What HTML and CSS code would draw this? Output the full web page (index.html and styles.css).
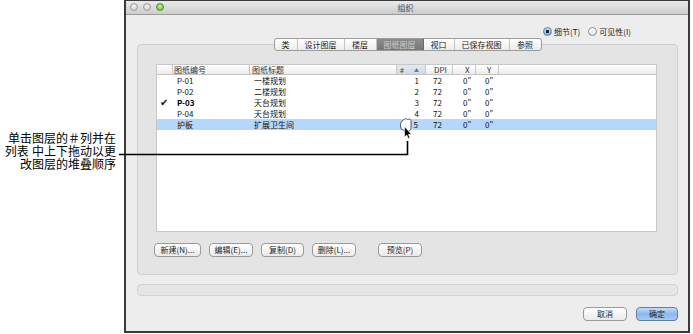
FILE: index.html
```html
<!DOCTYPE html>
<html lang="zh-CN">
<head>
<meta charset="utf-8">
<title>组织</title>
<link rel="stylesheet" href="styles.css">
</head>
<body>
<div class="page">
  <div class="note">
    <p>单击图层的＃列并在<br>列表 中上下拖动以更<br>改图层的堆叠顺序</p>
  </div>
  <div class="window">
    <div class="titlebar">
      <div class="lights"><span class="light"></span><span class="light"></span><span class="light green"></span></div>
      <div class="title">组织</div>
    </div>
    <div class="content">
      <div class="radios">
        <label class="radio"><span class="dot on"></span>细节(T)</label>
        <label class="radio"><span class="dot"></span>可见性(I)</label>
      </div>
      <div class="tabs">
        <span class="tab w23">类</span><span class="tab w47">设计图层</span><span class="tab w32">楼层</span><span class="tab w47 sel">图纸图层</span><span class="tab w31">视口</span><span class="tab w55">已保存视图</span><span class="tab w31 last">参照</span>
      </div>
      <div class="group">
        <div class="list">
          <div class="row head">
            <span class="c chk"></span>
            <span class="c h num">图纸编号</span>
            <span class="c h ttl">图纸标题</span>
            <span class="c h ord sorted"><b>#</b><i>▲</i></span>
            <span class="c h dpi">DPI</span>
            <span class="c h xx">X</span>
            <span class="c h yy">Y</span>
            <span class="c rest"></span>
          </div>
          <div class="row">
            <span class="c chk"></span><span class="c num">P-01</span><span class="c ttl">一楼规划</span><span class="c ord">1</span><span class="c dpi">72</span><span class="c xx">0"</span><span class="c yy">0"</span><span class="c rest"></span>
          </div>
          <div class="row">
            <span class="c chk"></span><span class="c num">P-02</span><span class="c ttl">二楼规划</span><span class="c ord">2</span><span class="c dpi">72</span><span class="c xx">0"</span><span class="c yy">0"</span><span class="c rest"></span>
          </div>
          <div class="row">
            <span class="c chk">✔</span><span class="c num strong">P-03</span><span class="c ttl">天台规划</span><span class="c ord">3</span><span class="c dpi">72</span><span class="c xx">0"</span><span class="c yy">0"</span><span class="c rest"></span>
          </div>
          <div class="row">
            <span class="c chk"></span><span class="c num">P-04</span><span class="c ttl">天台规划</span><span class="c ord">4</span><span class="c dpi">72</span><span class="c xx">0"</span><span class="c yy">0"</span><span class="c rest"></span>
          </div>
          <div class="row selected">
            <span class="c chk"></span><span class="c num">护板</span><span class="c ttl">扩展卫生间</span><span class="c ord drag">5</span><span class="c dpi">72</span><span class="c xx">0"</span><span class="c yy">0"</span><span class="c rest"></span>
          </div>
        </div>
        <div class="actions">
          <button class="btn w47b">新建(N)...</button>
          <button class="btn w44">编辑(E)...</button>
          <button class="btn w43">复制(D)</button>
          <button class="btn w44">删除(L)...</button>
          <button class="btn w44 gap">预览(P)</button>
        </div>
      </div>
      <div class="progress"></div>
      <div class="footer">
        <button class="btn w44">取消</button>
        <button class="btn w42 default">确定</button>
      </div>
    </div>
  </div>
  <svg class="overlay" width="693" height="334" viewBox="0 0 693 334">
    <path d="M119 154.5 H407.5 V141" fill="none" stroke="#000" stroke-width="1.6"/>
    <path d="M401.5 129.5 C400 126 400 123 402 121 L404 119.5 C405 118.5 406.5 118.5 407.5 119.5 L409.5 119 C410.5 119.2 411 120 411 121 L411 127 C411 129 410 130.5 408.5 131.5 Z" fill="#fff" stroke="#333" stroke-width="0.8"/>
    <path d="M404.5 126.5 L404.5 137 L406.8 135 L408.3 138.5 L409.8 137.8 L408.4 134.4 L411.3 134.2 Z" fill="#000" stroke="#fff" stroke-width="0.6"/>
  </svg>
</div>
</body>
</html>
```

FILE: styles.css
```css
* { box-sizing: border-box; }
html, body { margin: 0; padding: 0; background: #fff; }
body {
  font-family: "Noto Sans CJK SC", "Noto Sans", sans-serif;
  width: 693px;
  height: 334px;
  overflow: hidden;
}
.page {
  position: relative;
  display: flex;
  width: 693px;
  height: 334px;
}
.note {
  width: 124px;
  flex: none;
  padding: 133px 8px 0 0;
  text-align: right;
}
.note p {
  margin: 0;
  font-family: "Liberation Sans", "Noto Sans CJK SC", sans-serif;
  font-size: 12px;
  line-height: 13px;
  color: #000;
  letter-spacing: 0;
}
.window {
  width: 566px;
  height: 333px;
  flex: none;
  border: 2px solid #3a3a3a;
  border-top-width: 1px;
  background: #ededed;
  display: flex;
  flex-direction: column;
}
.titlebar {
  height: 14px;
  flex: none;
  background: linear-gradient(#e9e9e9, #cdcdcd);
  border-bottom: 1px solid #9a9a9a;
  position: relative;
  display: flex;
  align-items: center;
  justify-content: center;
}
.lights {
  position: absolute;
  left: 4px;
  top: 2px;
  display: flex;
  gap: 5px;
}
.light {
  width: 8px;
  height: 8px;
  border-radius: 50%;
  background: radial-gradient(circle at 50% 35%, #f4f4f4, #c4c4c4);
  border: 1px solid #9d9d9d;
}
.light.green {
  background: radial-gradient(circle at 50% 35%, #c9f2a0, #5bb336);
  border-color: #4b8f2c;
}
.title {
  font-size: 8px;
  line-height: 10px;
  color: #4a4a4a;
  margin-left: -3px;
}
.content {
  flex: 1;
  padding: 0 10px 0 11px;
  display: flex;
  flex-direction: column;
}
.radios {
  margin-top: 10px;
  height: 12px;
  display: flex;
  justify-content: flex-end;
  padding-right: 47px;
  gap: 8px;
}
.radio {
  display: flex;
  align-items: center;
  font-size: 8px;
  color: #222;
  gap: 2px;
}
.dot {
  width: 9px;
  height: 9px;
  border-radius: 50%;
  border: 1px solid #8b8b8b;
  background: linear-gradient(#fff, #e4e4e4);
  position: relative;
}
.dot.on {
  background: radial-gradient(circle, #1c2a3c 0 1.6px, transparent 2px), linear-gradient(#c9ddf5, #7fb0e6);
  border-color: #5a7ea8;
}
.tabs {
  margin-top: 1px;
  align-self: center;
  margin-left: 0;
  display: flex;
  height: 13px;
  position: relative;
  z-index: 1;
  border: 1px solid #9b9b9b;
  border-radius: 3px;
  background: linear-gradient(#ffffff, #ececec);
  overflow: hidden;
}
.tab {
  font-size: 8px;
  line-height: 11px;
  color: #222;
  text-align: center;
  border-right: 1px solid #c3c3c3;
}
.tab.last { border-right: 0; }
.tab.sel {
  background: linear-gradient(#8d8d8d, #767676);
  color: #cfcfcf;
  border-right-color: #6a6a6a;
}
.w23 { width: 23px; }
.w31 { width: 31px; }
.w32 { width: 32px; }
.w47 { width: 47px; }
.w55 { width: 55px; }
.group {
  margin-top: -7px;
  height: 231px;
  flex: none;
  border: 1px solid #d0d0d0;
  border-radius: 4px;
  background: #e4e4e4;
  padding: 19px 20px 0 18px;
  display: flex;
  flex-direction: column;
}
.list {
  height: 168px;
  background: #fff;
  border: 1px solid #c7c7c7;
  display: flex;
  flex-direction: column;
}
.row {
  display: grid;
  grid-template-columns: 15px 77px 147px 29px 27px 23px 24px 1fr;
  height: 11px;
  font-size: 8px;
  line-height: 11px;
  color: #111;
}
.row.head {
  height: 10px;
  line-height: 10px;
  background: linear-gradient(#ffffff, #ececec);
  border-bottom: 1px solid #c4c4c4;
  color: #333;
}
.strong { font-weight: 700; color: #000; }
.row.selected { background: #b6d6fb; }
.c { white-space: nowrap; overflow: hidden; }
.h { border-left: 1px solid #c8c8c8; }
.head .num { padding-left: 1px; }
.head .ttl { padding-left: 2px; }
.head .ord { padding-left: 3px; display: flex; justify-content: space-between; padding-right: 6px; }
.head .ord b { font-weight: 400; font-size: 7px; }
.head .ord i { font-style: normal; font-size: 5px; color: #6a7a8c; }
.head .sorted { background: linear-gradient(#e3eaf3, #cdd9e7); }
.head .dpi { padding-left: 8px; }
.head .xx { padding-left: 12px; }
.head .yy { padding-left: 11px; border-right: 1px solid #c8c8c8; }
.chk { font-family: "DejaVu Sans", sans-serif; font-size: 10px; padding-left: 3px; line-height: 11px; }
.num { padding-left: 5px; }
.ttl { padding-left: 5px; }
.ord { text-align: right; padding-right: 6px; }
.ord.drag { padding-right: 7px; }
.dpi { padding-left: 8px; }
.xx { padding-left: 11px; }
.yy { padding-left: 10px; }
.actions {
  margin-top: 11px;
  display: flex;
  gap: 8px;
  margin-left: -2px;
}
.btn {
  font-family: "Noto Sans CJK SC", sans-serif;
  font-size: 8px;
  height: 14px;
  line-height: 12px;
  padding: 0;
  border: 1px solid #9a9a9a;
  border-radius: 4px;
  background: linear-gradient(#ffffff, #eaeaea);
  color: #222;
  text-align: center;
}
.w47b { width: 47px; }
.w44 { width: 44px; }
.w43 { width: 43px; }
.w42 { width: 42px; }
.btn.gap { margin-left: 14px; }
.btn.default {
  background: linear-gradient(#c7dcf4, #8ab7ea 50%, #a9cbf1);
  border-color: #5d7fa8;
}
.progress {
  margin-top: 9px;
  height: 12px;
  flex: none;
  border: 1px solid #d2d2d2;
  border-radius: 4px;
  background: #e5e5e5;
}
.footer {
  margin-top: 11px;
  display: flex;
  justify-content: flex-end;
  gap: 9px;
}
.overlay {
  position: absolute;
  left: 0;
  top: 0;
  pointer-events: none;
}
```
